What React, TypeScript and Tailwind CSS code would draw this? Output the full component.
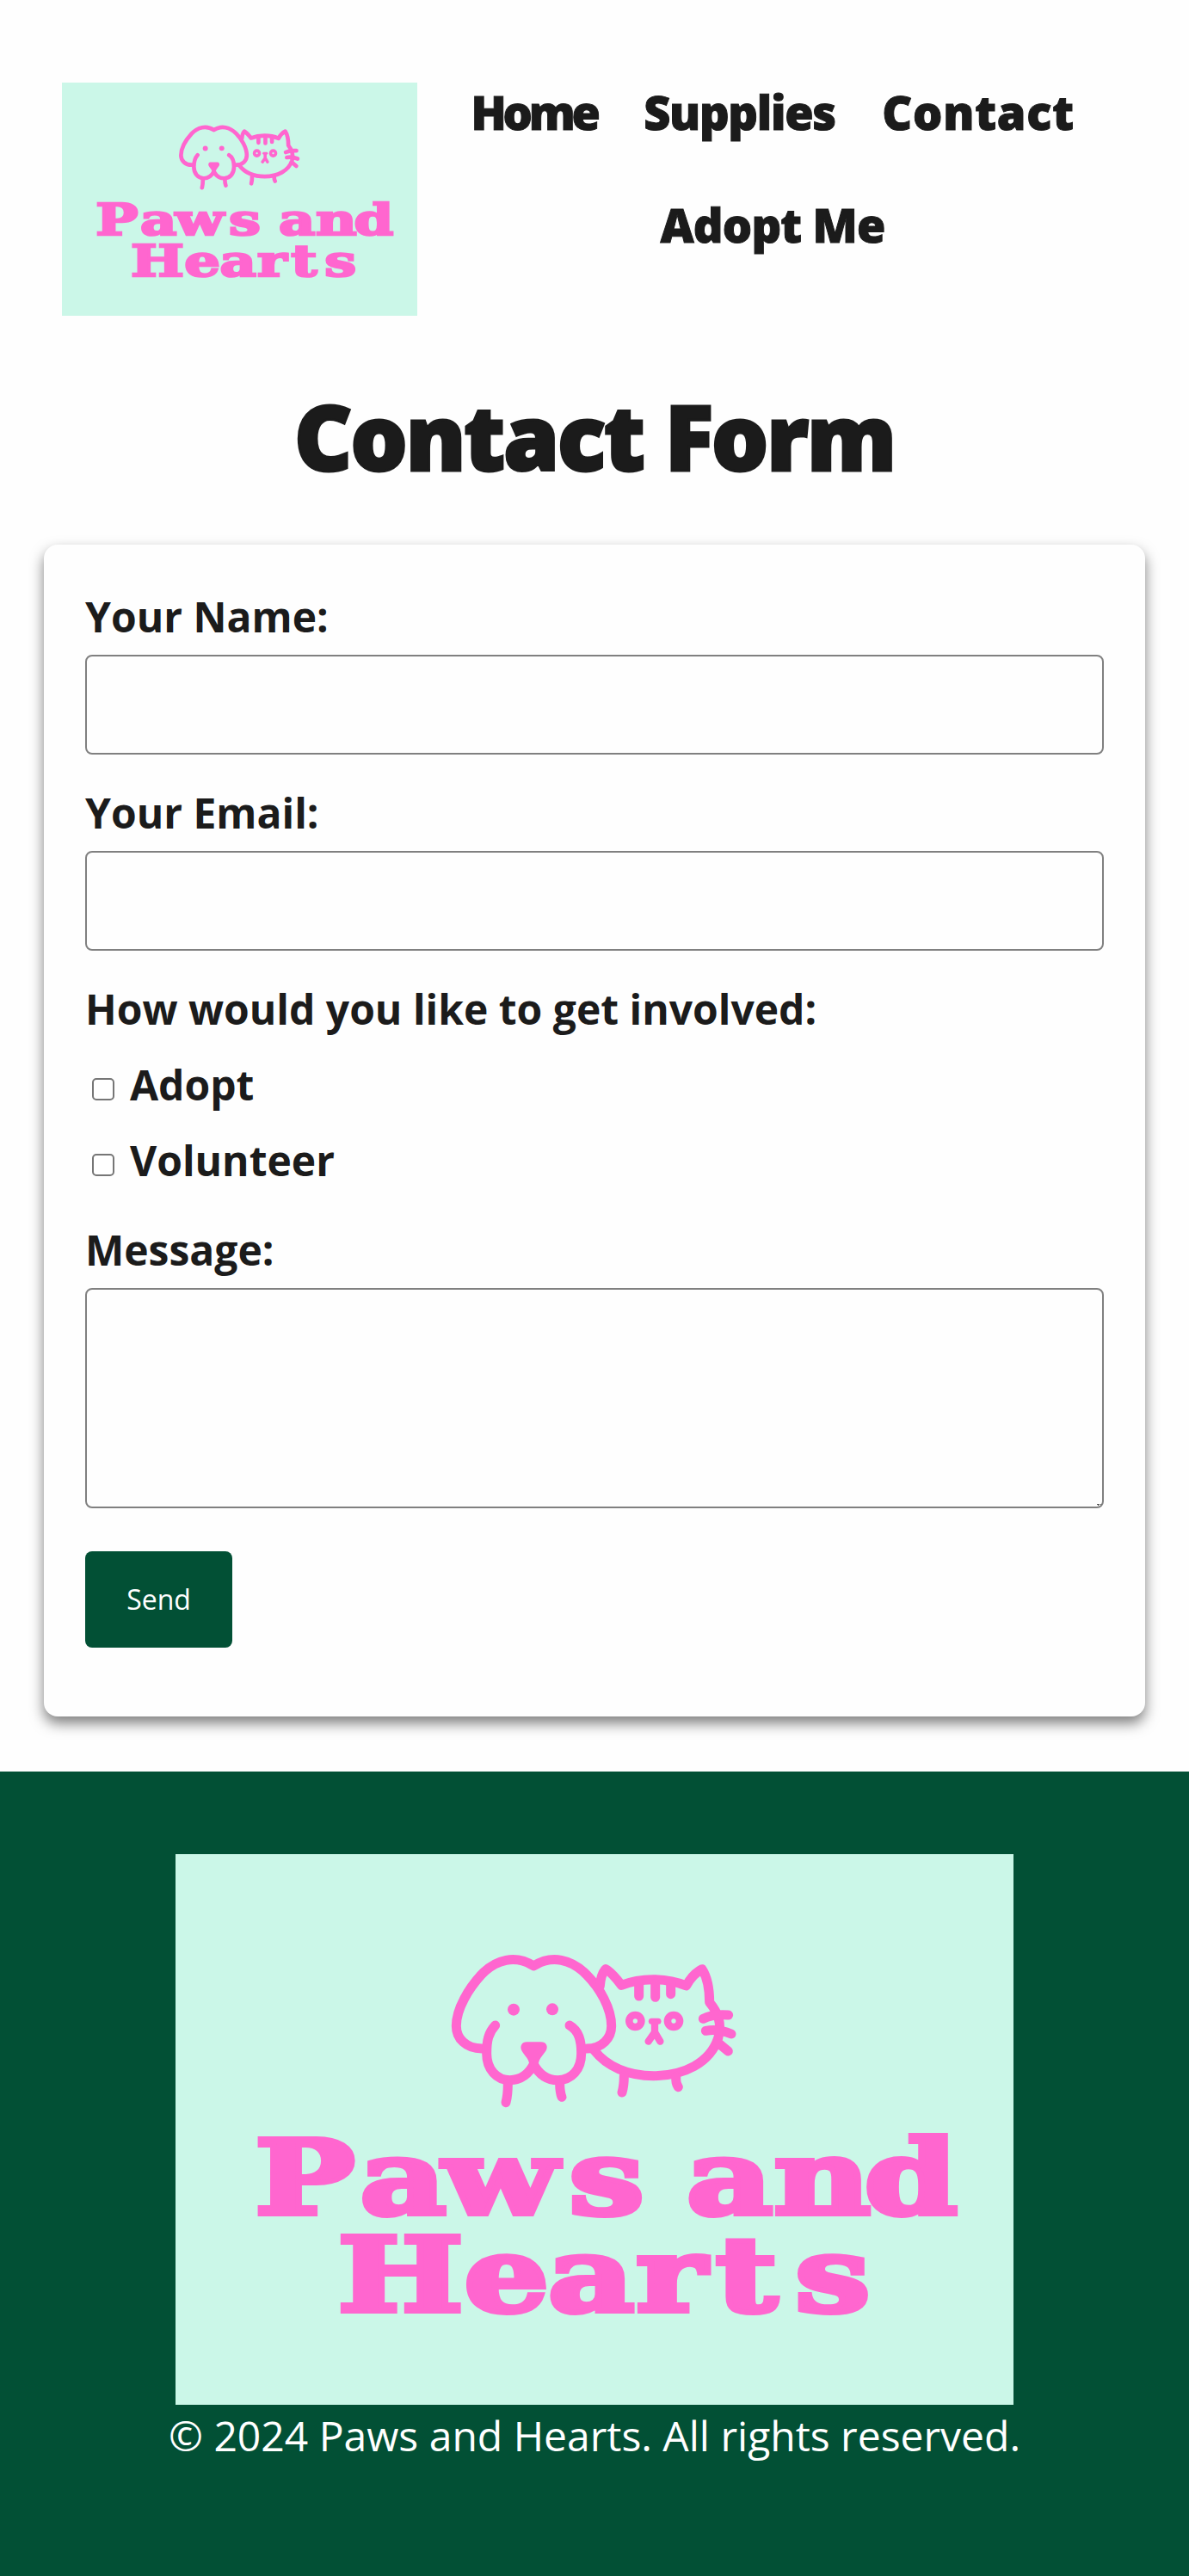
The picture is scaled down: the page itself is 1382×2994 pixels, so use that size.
import React from "react";

function Logo({ className }: { className: string }) {
  return (
    <svg viewBox="0 0 974 640" preserveAspectRatio="none" className={className} role="img" aria-label="Paws and Hearts">
      <rect width="974" height="640" fill="#cbf7e8" />
      <g
        transform="translate(296 85) scale(0.33333)"
        fill="none"
        stroke="#ff66cf"
        strokeWidth="33"
        strokeLinecap="round"
        strokeLinejoin="round"
      >
        {/* dog */}
        <path d="M180 423 C125 423 91 388 91 344 C91 283 136 212 178 166 C228 112 298 94 361 135 C424 94 494 112 546 166 C592 212 632 283 632 344 C632 386 600 423 546 423" />
        <path d="M227 342 C203 368 197 395 197 440 C197 495 232 533 278 533 C318 533 346 508 361 478 C378 510 406 533 445 533 C493 533 527 496 527 440 C527 395 519 361 486 342" />
        <path d="M271 545 C271 570 270 588 264 611 M452 545 C452 566 453 576 459 592" />
        <path d="M337 400 H386 C405 400 412 415 404 430 C395 444 381 458 379 470 L361 500 L344 470 C342 458 326 444 319 430 C312 415 319 400 337 400 Z" fill="#ff66cf" stroke="none" />
        <circle cx="291" cy="287" r="21" fill="#ff66cf" stroke="none" />
        <circle cx="426" cy="286" r="21" fill="#ff66cf" stroke="none" />
        {/* cat */}
        <path d="M592 205 C594 178 600 158 612 146 C633 157 651 181 667 202 C735 175 824 175 893 204 C907 178 925 158 948 146 C966 174 974 218 974 262 C1003 297 1019 334 1004 387 C976 472 885 518 779 518 C691 518 616 486 572 429" />
        <path d="M728 196 V240 M785 196 V244 M839 196 V233" />
        <circle cx="715" cy="327" r="21" strokeWidth="26" />
        <circle cx="849" cy="327" r="21" strokeWidth="26" />
        <path d="M772 328 H795" strokeWidth="21" />
        <path d="M783 334 V368 M783 366 L761 398 M783 366 L802 398" strokeWidth="25" />
        <path d="M952 319 C980 304 1010 304 1040 306 M961 361 C994 354 1022 360 1050 372 M1010 408 L1039 432" />
        <path d="M676 518 C676 540 675 555 669 576 M857 520 C857 540 858 545 865 557" />
      </g>
      <g
        transform="scale(1.3 1)"
        fill="#ff66cf"
        stroke="#ff66cf"
        strokeWidth="6"
        fontFamily="'DejaVu Serif', serif"
        fontWeight="700"
        fontSize="119"
      >
        <text y="418" x="71 165 239 352">Paws</text>
        <text y="418" x="457 535 616">and</text>
        <text y="531" x="145 258 333 412 483 554">Hearts</text>
      </g>
    </svg>
  );
}

function Field({ label, className }: { label: string; className: string }) {
  return (
    <label className={`block ${className}`}>
      <span className="block">{label}</span>
      <input type="text" className="mt-[11px] block h-[116px] w-full rounded-lg border-2 border-[#808080] bg-transparent px-4" />
    </label>
  );
}

function Check({ label }: { label: string }) {
  return (
    <label className="mt-[22px] flex items-start pl-2">
      <input type="checkbox" className="mt-[25px] mr-[18px] size-[26px] shrink-0 appearance-none rounded-[5px] border-2 border-[#767676] bg-white" />
      {label}
    </label>
  );
}

export default function App() {
  return (
    <div className="flex min-h-[2994px] w-full flex-col bg-[#fefefe] font-['Open_Sans',sans-serif] text-[#1b1b1b]">
      <header className="flex items-start pt-24 pl-[72px]">
        <Logo className="h-[271px] w-[413px] shrink-0" />
        <nav className="-mt-px flex w-[826px] flex-wrap justify-center gap-x-[53px] text-[54px] leading-[70px] font-extrabold whitespace-nowrap [-webkit-text-stroke:1px_#1b1b1b]">
          <a href="#home" className="flex w-[147px] justify-center tracking-[-4.3px]">Home</a>
          <a href="#supplies" className="flex w-[225px] justify-center tracking-[-1.3px]">Supplies</a>
          <a href="#contact" className="flex w-[224px] justify-center tracking-[0.8px]">Contact</a>
          <a href="#adopt" className="mt-[61px] flex w-[260px] justify-center tracking-[-0.8px]">Adopt Me</a>
        </nav>
      </header>

      <main>
        <h1 className="mt-[75px] text-center text-[104px] leading-[130px] font-extrabold tracking-[-2px] [-webkit-text-stroke:3px_#1b1b1b]">Contact Form</h1>
        <form
          onSubmit={(e) => e.preventDefault()}
          className="mt-[61px] mr-[51px] ml-[51px] h-[1362px] rounded-2xl bg-[#fefefe] px-12 pt-[51px] text-[48px] leading-[66px] font-bold shadow-[0_8px_16px_rgba(0,0,0,0.5)]"
        >
          <Field label="Your Name:" className="" />
          <Field label="Your Email:" className="mt-[35px]" />
          <p className="mt-[35px]">How would you like to get involved:</p>
          <Check label="Adopt" />
          <Check label="Volunteer" />
          <label className="relative mt-[38px] block">
            <span className="block">Message:</span>
            <textarea className="mt-[11px] block h-64 w-full resize-none rounded-lg border-2 border-[#808080] bg-transparent p-4" />
            <svg viewBox="0 0 6 4" className="absolute right-[2px] bottom-[2px] h-1 w-1.5" fill="none" stroke="#555">
              <path d="M0 1.5H3M1.5 3V1M4 1.5H5" />
            </svg>
          </label>
          <button type="submit" className="mt-[50px] block h-28 w-[171px] rounded-lg bg-[#025035] text-[32px] font-normal text-white">
            Send
          </button>
        </form>
      </main>

      <footer className="mt-16 flex grow flex-col items-center bg-[#025035] pt-24">
        <Logo className="h-[640px] w-[974px]" />
        <p className="mt-[3px] text-[48px] leading-[66px] text-white">© 2024 Paws and Hearts. All rights reserved.</p>
      </footer>
    </div>
  );
}
